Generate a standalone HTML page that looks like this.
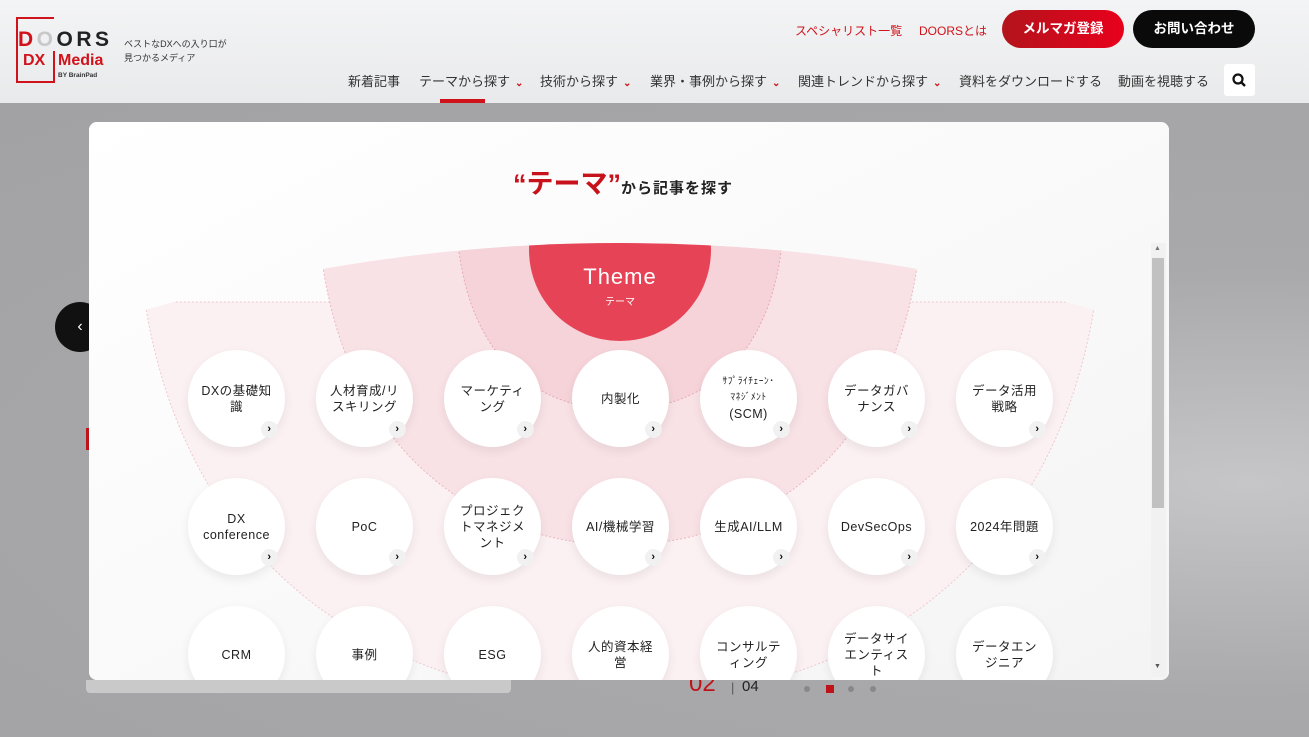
<!DOCTYPE html>
<html><head><meta charset="utf-8">
<style>
*{margin:0;padding:0;box-sizing:border-box}
body{width:1309px;height:737px;overflow:hidden;position:relative;background:#a7a7a9;font-family:"Liberation Sans","Noto Sans CJK JP",sans-serif;color:#222}
.hdr{position:absolute;left:0;top:0;width:1309px;height:103px;background:linear-gradient(#f3f4f5,#e9eaeb)}
.a{position:absolute;white-space:nowrap}
.nav{top:71px;font-size:13px;color:#333}
.chev{color:#d0121b;font-size:10px;margin-left:5px;font-weight:bold}
.btn{position:absolute;top:10px;height:38px;border-radius:19px;color:#fff;font-weight:bold;font-size:13.5px;text-align:center;line-height:38px}
.modal{position:absolute;left:89px;top:122px;width:1080px;height:558px;background:#fff;border-radius:8px;overflow:hidden}
.c{position:absolute;width:97px;height:97px;border-radius:50%;background:#fff;box-shadow:0 4px 10px rgba(0,0,0,.07);display:flex;align-items:center;justify-content:center;text-align:center;font-size:12.5px;line-height:16px;color:#222;letter-spacing:.5px}
.c i{position:absolute;right:7px;bottom:9px;width:17px;height:17px;border-radius:50%;background:#f1f1f1;font-style:normal;font-size:11px;font-weight:bold;line-height:17px;text-align:center;color:#111}
</style></head><body>
<div class="a" style="left:0;top:103px;width:1309px;height:634px;background:radial-gradient(ellipse at 1250px 380px,#c6c6c8 0,#a9a9ab 40%,#a2a2a4 100%)"></div>
<div class="a" style="left:55px;top:302px;width:50px;height:50px;border-radius:50%;background:#111;color:#fff;font-size:16px;line-height:50px;text-align:center">‹</div>
<div class="a" style="left:86px;top:428px;width:4px;height:22px;background:#c0121b"></div>
<div class="a" style="left:86px;top:680px;width:425px;height:13px;background:#c9c9c9;border-radius:0 0 4px 4px"></div>
<div class="a" style="left:689px;top:670px;font-size:24px;color:#c0121b">02</div>
<div class="a" style="left:731px;top:680px;font-size:13px;color:#555">|</div>
<div class="a" style="left:742px;top:678px;font-size:15px;color:#222">04</div>
<div class="a" style="left:804px;top:686px;width:6px;height:6px;border-radius:50%;background:#888"></div>
<div class="a" style="left:826px;top:685px;width:8px;height:8px;background:#c0121b"></div>
<div class="a" style="left:848px;top:686px;width:6px;height:6px;border-radius:50%;background:#888"></div>
<div class="a" style="left:870px;top:686px;width:6px;height:6px;border-radius:50%;background:#888"></div>

<div class="hdr"></div>
<svg class="a" style="left:16px;top:17px" width="40" height="66"><path d="M38 1H1V65H38V34" fill="none" stroke="#d0121b" stroke-width="2"/></svg>
<div class="a" style="left:18px;top:28px;font-size:21px;font-weight:bold;letter-spacing:3.5px;line-height:24px"><span style="color:#d0121b">D</span><span style="color:#c8c8c8">O</span>ORS</div>
<div class="a" style="left:23px;top:52px;font-size:16px;font-weight:bold;color:#d0121b;line-height:18px">DX</div>
<div class="a" style="left:58px;top:52px;font-size:16px;font-weight:bold;color:#d0121b;line-height:18px">Media</div>
<div class="a" style="left:58px;top:72px;font-size:6.5px;font-weight:bold;color:#333">BY BrainPad</div>
<div class="a" style="left:124px;top:37px;font-size:9px;line-height:14px;color:#333">ベストなDXへの入り口が<br>見つかるメディア</div>
<div class="a" style="left:795px;top:22px;font-size:12px;color:#d0121b">スペシャリスト一覧</div>
<div class="a" style="left:919px;top:22px;font-size:12px;color:#d0121b">DOORSとは</div>
<div class="btn" style="left:1002px;width:122px;background:linear-gradient(90deg,#b3141c,#e8001c)">メルマガ登録</div>
<div class="btn" style="left:1133px;width:122px;background:#0a0a0a">お問い合わせ</div>
<div class="a nav" style="left:348px">新着記事</div>
<div class="a nav" style="left:419px">テーマから探す<span class="chev">⌄</span></div>
<div class="a nav" style="left:540px">技術から探す<span class="chev">⌄</span></div>
<div class="a nav" style="left:650px">業界・事例から探す<span class="chev">⌄</span></div>
<div class="a nav" style="left:798px">関連トレンドから探す<span class="chev">⌄</span></div>
<div class="a nav" style="left:959px">資料をダウンロードする</div>
<div class="a nav" style="left:1118px">動画を視聴する</div>
<div class="a" style="left:1224px;top:64px;width:31px;height:32px;background:#fff;border-radius:3px"><svg width="31" height="32"><circle cx="14" cy="15" r="4.5" fill="none" stroke="#111" stroke-width="2.2"/><line x1="17.5" y1="18.5" x2="21" y2="22" stroke="#111" stroke-width="2.5"/></svg></div>
<div class="a" style="left:440px;top:99px;width:45px;height:4px;background:#d0121b"></div>

<div class="modal">
<svg class="a" style="left:0;top:0" width="1080" height="558">
<defs><clipPath id="cp"><circle cx="531" cy="1838" r="1717"/></clipPath>
<linearGradient id="bg" x1="0" y1="0" x2="1" y2="1"><stop offset="0" stop-color="#fff"/><stop offset="1" stop-color="#f4f4f4"/></linearGradient></defs>
<rect width="1080" height="558" fill="url(#bg)"/>
<g clip-path="url(#cp)">
<path d="M56,180 C90,400 240,570 531,580 C822,570 972,400 1006,180 Z" fill="#fbf0f2" stroke="#efc9cf" stroke-dasharray="2 2"/>
<path d="M231,120 C251,328 391,423 531,423 C671,423 811,328 831,120 Z" fill="#f8e2e6" stroke="#ebb7bf" stroke-dasharray="2 2"/>
<path d="M368,110 C379,258 471,288 531,288 C591,288 683,258 694,110 Z" fill="#f5d3d9" stroke="#e8aab4" stroke-dasharray="2 2"/>
<circle cx="531" cy="128" r="91" fill="#e64456"/>
</g>
</svg>
<div class="a" style="left:424px;top:44px;font-size:27px;font-weight:bold;color:#c8121b;line-height:36px">“テーマ”<span style="font-size:15px;color:#222;letter-spacing:1px">から記事を探す</span></div>
<div class="a" style="left:440px;top:142px;width:182px;text-align:center;color:#fff;font-size:22px;letter-spacing:1px">Theme</div>
<div class="a" style="left:440px;top:171px;width:182px;text-align:center;color:#fff;font-size:10px">テーマ</div>

<div class="c" style="left:99px;top:228px">DXの基礎知<br>識<i>›</i></div>
<div class="c" style="left:227px;top:228px">人材育成/リ<br>スキリング<i>›</i></div>
<div class="c" style="left:355px;top:228px">マーケティ<br>ング<i>›</i></div>
<div class="c" style="left:483px;top:228px">内製化<i>›</i></div>
<div class="c" style="left:611px;top:228px"><div style="font-size:9.5px;line-height:16px">ｻﾌﾟﾗｲﾁｪｰﾝ･<br>ﾏﾈｼﾞﾒﾝﾄ<br><span style="font-size:12.5px">(SCM)</span></div><i>›</i></div>
<div class="c" style="left:739px;top:228px">データガバ<br>ナンス<i>›</i></div>
<div class="c" style="left:867px;top:228px">データ活用<br>戦略<i>›</i></div>

<div class="c" style="left:99px;top:356px">DX<br>conference<i>›</i></div>
<div class="c" style="left:227px;top:356px">PoC<i>›</i></div>
<div class="c" style="left:355px;top:356px">プロジェク<br>トマネジメ<br>ント<i>›</i></div>
<div class="c" style="left:483px;top:356px">AI/機械学習<i>›</i></div>
<div class="c" style="left:611px;top:356px">生成AI/LLM<i>›</i></div>
<div class="c" style="left:739px;top:356px">DevSecOps<i>›</i></div>
<div class="c" style="left:867px;top:356px">2024年問題<i>›</i></div>

<div class="c" style="left:99px;top:484px">CRM</div>
<div class="c" style="left:227px;top:484px">事例</div>
<div class="c" style="left:355px;top:484px">ESG</div>
<div class="c" style="left:483px;top:484px">人的資本経<br>営</div>
<div class="c" style="left:611px;top:484px">コンサルテ<br>ィング</div>
<div class="c" style="left:739px;top:484px">データサイ<br>エンティス<br>ト</div>
<div class="c" style="left:867px;top:484px">データエン<br>ジニア</div>

<div class="a" style="left:1062px;top:121px;width:15px;height:434px;background:#f1f1f1"></div>
<div class="a" style="left:1063px;top:136px;width:12px;height:250px;background:#c1c1c1"></div>
<div class="a" style="left:1065px;top:123px;font-size:7px;color:#777">▲</div>
<div class="a" style="left:1065px;top:541px;font-size:7px;color:#555">▼</div>
</div>
</body></html>
